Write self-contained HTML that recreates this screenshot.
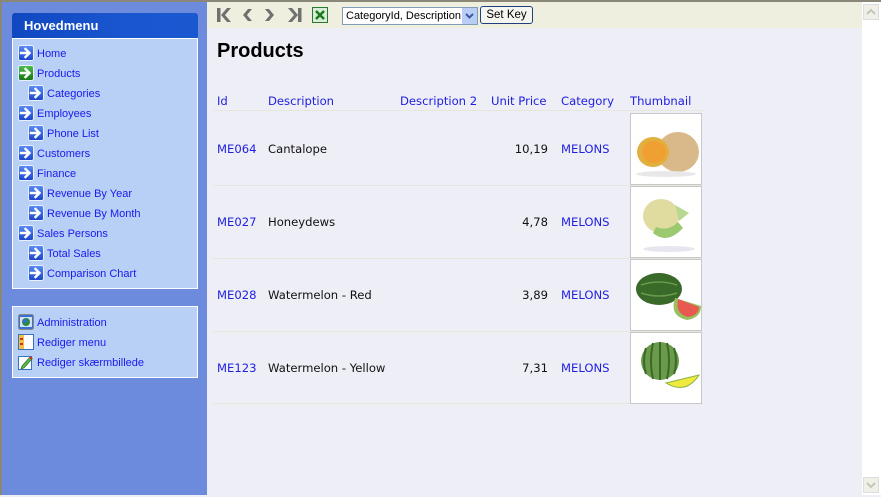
<!DOCTYPE html>
<html><head><meta charset="utf-8">
<style>
*{margin:0;padding:0;box-sizing:border-box}
body{width:881px;height:495px;overflow:hidden;background:#eeeef7;position:relative;font-family:"Liberation Sans",sans-serif}
.a{position:absolute}
#frame{left:0;top:0;width:881px;height:2px;background:#8a8778}
#lb{left:0;top:0;width:2px;height:495px;background:#8a8778}
#side{left:2px;top:2px;width:205px;height:493px;background:#6c8bdc}
.box{background:#b8cff6;border:1px solid #fff}
#hdr{left:12px;top:13px;width:186px;height:25px;background:linear-gradient(90deg,#1048c0,#1a56cf 60%,#1a58d0);border-radius:3px 3px 0 0;color:#fff;font-weight:bold;font-size:13px;padding:5px 0 0 12px}
.mi{position:absolute;font-size:11px;color:#1a1aee;white-space:nowrap;height:16px;line-height:16px}
.mi svg{position:absolute;left:-19px;top:-1px}
#tb{left:207px;top:2px;width:655px;height:26px;background:#efefe0}
#sb{left:862px;top:2px;width:19px;height:493px;background:#fff}
h1{position:absolute;left:217px;top:40px;font-size:20px;font-weight:bold;color:#000;font-family:"Liberation Sans",sans-serif}
.t{position:absolute;font-family:"DejaVu Sans",sans-serif;font-size:11.6px;white-space:nowrap}
.l{color:#2020e0}.k{color:#111}
.sep{position:absolute;left:213px;width:490px;height:1px;background:#e6e6dc}
.th{position:absolute;left:630px;width:72px;height:72px;background:#fff;border:1px solid #c8c8c8}
</style></head><body>
<div class="a" id="side"></div>
<div class="a" id="frame"></div>
<div class="a" id="lb"></div>
<div class="a box" style="left:12px;top:38px;width:186px;height:251px"></div>
<div class="a" id="hdr">Hovedmenu</div>
<svg width="0" height="0" style="position:absolute"><defs>
<linearGradient id="bg" x1="0" y1="0" x2="0" y2="1"><stop offset="0" stop-color="#5a8cf5"/><stop offset="1" stop-color="#1a44c8"/></linearGradient>
<linearGradient id="gg" x1="0" y1="0" x2="0" y2="1"><stop offset="0" stop-color="#4cc04c"/><stop offset="1" stop-color="#157515"/></linearGradient>
<symbol id="ar" viewBox="0 0 16 16"><path d="M3 8h8M7.5 4l4 4-4 4" stroke="#fff" stroke-width="2.4" fill="none" stroke-linecap="square"/></symbol>
</defs></svg>
<div class="mi" style="left:37px;top:46px"><svg width="16" height="16"><rect x=".5" y=".5" width="15" height="15" rx="2" fill="url(#bg)" stroke="#e8eefc"/><use href="#ar" width="16" height="16"/></svg>Home</div>
<div class="mi" style="left:37px;top:66px"><svg width="16" height="16"><rect x=".5" y=".5" width="15" height="15" rx="2" fill="url(#gg)" stroke="#e8eefc"/><use href="#ar" width="16" height="16"/></svg>Products</div>
<div class="mi" style="left:47px;top:86px"><svg width="16" height="16"><rect x=".5" y=".5" width="15" height="15" rx="2" fill="url(#bg)" stroke="#e8eefc"/><use href="#ar" width="16" height="16"/></svg>Categories</div>
<div class="mi" style="left:37px;top:106px"><svg width="16" height="16"><rect x=".5" y=".5" width="15" height="15" rx="2" fill="url(#bg)" stroke="#e8eefc"/><use href="#ar" width="16" height="16"/></svg>Employees</div>
<div class="mi" style="left:47px;top:126px"><svg width="16" height="16"><rect x=".5" y=".5" width="15" height="15" rx="2" fill="url(#bg)" stroke="#e8eefc"/><use href="#ar" width="16" height="16"/></svg>Phone List</div>
<div class="mi" style="left:37px;top:146px"><svg width="16" height="16"><rect x=".5" y=".5" width="15" height="15" rx="2" fill="url(#bg)" stroke="#e8eefc"/><use href="#ar" width="16" height="16"/></svg>Customers</div>
<div class="mi" style="left:37px;top:166px"><svg width="16" height="16"><rect x=".5" y=".5" width="15" height="15" rx="2" fill="url(#bg)" stroke="#e8eefc"/><use href="#ar" width="16" height="16"/></svg>Finance</div>
<div class="mi" style="left:47px;top:186px"><svg width="16" height="16"><rect x=".5" y=".5" width="15" height="15" rx="2" fill="url(#bg)" stroke="#e8eefc"/><use href="#ar" width="16" height="16"/></svg>Revenue By Year</div>
<div class="mi" style="left:47px;top:206px"><svg width="16" height="16"><rect x=".5" y=".5" width="15" height="15" rx="2" fill="url(#bg)" stroke="#e8eefc"/><use href="#ar" width="16" height="16"/></svg>Revenue By Month</div>
<div class="mi" style="left:37px;top:226px"><svg width="16" height="16"><rect x=".5" y=".5" width="15" height="15" rx="2" fill="url(#bg)" stroke="#e8eefc"/><use href="#ar" width="16" height="16"/></svg>Sales Persons</div>
<div class="mi" style="left:47px;top:246px"><svg width="16" height="16"><rect x=".5" y=".5" width="15" height="15" rx="2" fill="url(#bg)" stroke="#e8eefc"/><use href="#ar" width="16" height="16"/></svg>Total Sales</div>
<div class="mi" style="left:47px;top:266px"><svg width="16" height="16"><rect x=".5" y=".5" width="15" height="15" rx="2" fill="url(#bg)" stroke="#e8eefc"/><use href="#ar" width="16" height="16"/></svg>Comparison Chart</div>
<div class="a box" style="left:12px;top:306px;width:186px;height:72px"></div>
<div class="mi" style="left:37px;top:315px"><svg width="16" height="16"><rect x=".5" y=".5" width="15" height="15" rx="2" fill="#3a70d0" stroke="#888"/><rect x="2" y="3" width="12" height="10" fill="#cfe0f8"/><circle cx="8" cy="8" r="4" fill="#2a8a3a"/><circle cx="7" cy="7" r="2" fill="#3a6ae0"/></svg>Administration</div>
<div class="mi" style="left:37px;top:335px"><svg width="16" height="16"><rect x=".5" y=".5" width="15" height="15" fill="#fff" stroke="#3a70c0"/><rect x="1" y="1" width="5" height="14" fill="#f0c040"/><rect x="2" y="4" width="3" height="2" fill="#d03020"/><rect x="2" y="9" width="3" height="2" fill="#d03020"/></svg>Rediger menu</div>
<div class="mi" style="left:37px;top:355px"><svg width="16" height="16"><rect x=".5" y="2.5" width="13" height="13" fill="#fff" stroke="#3a70c0"/><path d="M4 12l8-9 2 2-8 9-3 1z" fill="#5cb84c" stroke="#2a6a2a" stroke-width=".7"/><path d="M12 3l2 2" stroke="#d03020" stroke-width="2"/></svg>Rediger skærmbillede</div>

<div class="a" id="tb"></div>
<svg class="a" style="left:215px;top:6px" width="120" height="18">
<g fill="#707070">
<rect x="2" y="2" width="3.5" height="14"/><path d="M6 9l6-7h4l-6 7 6 7h-4z"/>
<path d="M28 9l5-6h4l-5 6 5 6h-4z"/>
<path d="M50 3h4l5 6-5 6h-4l5-6z"/>
<path d="M73 2h4l6 7-6 7h-4l6-7z"/><rect x="83" y="2" width="3.5" height="14"/>
</g>
<rect x="97.5" y="1.5" width="15" height="15" fill="#d8ecd8" stroke="#2a7a2a"/><path d="M101 5l8 8M109 5l-8 8" stroke="#1a7a1a" stroke-width="2.5"/>
</svg>
<div class="a" style="left:342px;top:7px;width:136px;height:18px;background:#fff;border:1px solid #7f9db9;font-size:11px;padding:2px 0 0 3px;font-family:'Liberation Sans',sans-serif;overflow:hidden;white-space:nowrap">CategoryId, Description</div>
<div class="a" style="left:462px;top:8px;width:15px;height:16px;background:#b9cdf6"><svg width="15" height="16"><path d="M4 6l3.5 3.5L11 6" stroke="#3a58a0" stroke-width="2" fill="none"/></svg></div>
<div class="a" style="left:480px;top:6px;width:53px;height:18px;background:#f6f6f0;border:1px solid #1f3f7f;border-radius:3px;font-size:11.5px;text-align:center;line-height:16px">Set Key</div>

<div class="a" id="sb"></div>
<div class="a" style="left:863px;top:4px;width:16px;height:16px;border:1px solid #ddd;background:#f0f0e8"><svg width="14" height="14"><path d="M3 9l4-4 4 4" stroke="#c0c8b8" stroke-width="2" fill="none"/></svg></div>
<div class="a" style="left:863px;top:477px;width:16px;height:16px;border:1px solid #ddd;background:#f0f0e8"><svg width="14" height="14"><path d="M3 5l4 4 4-4" stroke="#c0c8b8" stroke-width="2" fill="none"/></svg></div>

<h1>Products</h1>
<div class="t l" style="left:217px;top:94px">Id</div>
<div class="t l" style="left:268px;top:94px">Description</div>
<div class="t l" style="left:400px;top:94px">Description 2</div>
<div class="t l" style="left:491px;top:94px">Unit Price</div>
<div class="t l" style="left:561px;top:94px">Category</div>
<div class="t l" style="left:630px;top:94px">Thumbnail</div>
<div class="sep" style="top:110px"></div>
<div class="sep" style="top:185px"></div>
<div class="sep" style="top:258px"></div>
<div class="sep" style="top:331px"></div>
<div class="sep" style="top:403px"></div>

<div class="t l" style="left:217px;top:142px">ME064</div><div class="t k" style="left:268px;top:142px">Cantalope</div><div class="t k" style="left:500px;top:142px;width:48px;text-align:right">10,19</div><div class="t l" style="left:561px;top:142px">MELONS</div>
<div class="t l" style="left:217px;top:215px">ME027</div><div class="t k" style="left:268px;top:215px">Honeydews</div><div class="t k" style="left:500px;top:215px;width:48px;text-align:right">4,78</div><div class="t l" style="left:561px;top:215px">MELONS</div>
<div class="t l" style="left:217px;top:288px">ME028</div><div class="t k" style="left:268px;top:288px">Watermelon - Red</div><div class="t k" style="left:500px;top:288px;width:48px;text-align:right">3,89</div><div class="t l" style="left:561px;top:288px">MELONS</div>
<div class="t l" style="left:217px;top:361px">ME123</div><div class="t k" style="left:268px;top:361px">Watermelon - Yellow</div><div class="t k" style="left:500px;top:361px;width:48px;text-align:right">7,31</div><div class="t l" style="left:561px;top:361px">MELONS</div>

<div class="th" style="top:113px"><svg width="70" height="70"><ellipse cx="47" cy="38" rx="21" ry="20" fill="#d9b98a"/><ellipse cx="22" cy="38" rx="16" ry="15" fill="#e2b040"/><ellipse cx="23" cy="38" rx="12" ry="11" fill="#f0a030"/><ellipse cx="35" cy="60" rx="30" ry="3" fill="#e8e8e8"/></svg></div>
<div class="th" style="top:186px"><svg width="70" height="70"><ellipse cx="30" cy="29" rx="18" ry="17" fill="#e0dca0"/><path d="M22 46q14 12 30 -5l-5 -6q-10 10 -22 5z" fill="#9cc870"/><path d="M44 18l14 8-10 8z" fill="#b8d890"/><ellipse cx="38" cy="62" rx="26" ry="3" fill="#e6e6ee"/></svg></div>
<div class="th" style="top:259px"><svg width="70" height="70"><ellipse cx="28" cy="29" rx="23" ry="16" fill="#3a6a2a"/><path d="M10 25q18 -6 36 0M10 33q18 6 36 0" stroke="#6a9a4a" stroke-width="1.5" fill="none"/><path d="M44 38q-6 18 12 22q14 -2 14 -14z" fill="#98c060"/><path d="M47 39q-3 15 10 18q11 -2 11 -10z" fill="#e85a50"/></svg></div>
<div class="th" style="top:332px"><svg width="70" height="70"><circle cx="29" cy="28" r="19" fill="#6a9a4a"/><path d="M15 15q-4 13 0 26M22 10q-4 18 0 36M29 9v38M36 10q4 18 0 36M43 15q4 13 0 26" stroke="#3a6a2a" stroke-width="2" fill="none"/><path d="M35 50q20 12 33 -8z" fill="#f0ea40" stroke="#8ab040"/></svg></div>
</body></html>
